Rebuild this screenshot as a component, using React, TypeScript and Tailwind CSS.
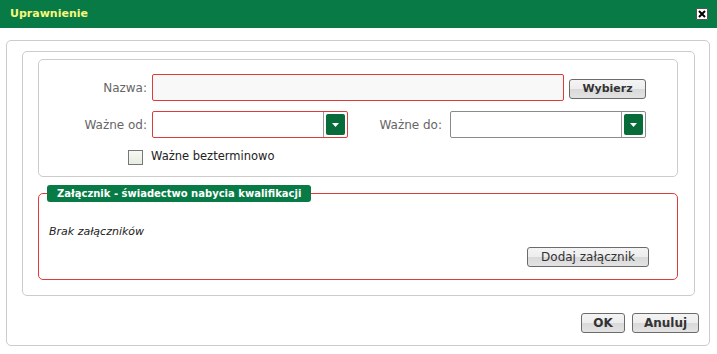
import React from "react";

const font = { fontFamily: '"DejaVu Sans", Verdana, sans-serif' };

function Btn({ children, w, bold = true, size = "text-[11px]" }: { children: React.ReactNode; w: string; bold?: boolean; size?: string }) {
  return (
    <button
      className={`${w} h-[20px] rounded-[3px] border border-[#6b6b6b] bg-[linear-gradient(#f4f4f4_0%,#ededed_50%,#d9d9d9_51%,#e3e3e3_100%)] ${size} text-[#333] leading-none flex items-center justify-center ${bold ? "font-bold" : ""}`}
    >
      {children}
    </button>
  );
}

function DateInput({ red }: { red: boolean }) {
  return (
    <div
      className={`w-[196px] h-[27px] rounded-[2px] border ${red ? "border-[#e03a3a]" : "border-[#8a8a8a]"} bg-white flex items-stretch justify-end`}
    >
      <div className="w-px bg-[#9a9a9a] mr-[2px]" />
      <div className="my-[2px] mr-[2px] w-[19px] rounded-[2px] bg-[#086b3a] flex items-center justify-center">
        <svg width="7" height="4" viewBox="0 0 7 4">
          <path d="M0 0 H7 L3.5 4 Z" fill="#fff" />
        </svg>
      </div>
    </div>
  );
}

export default function App() {
  return (
    <div className="w-[717px] h-[354px] bg-white flex flex-col" style={font}>
      <div className="h-[28px] bg-[#077a45] flex items-center justify-between pl-[10px] pr-[9px] shrink-0">
        <span className="text-[11px] font-bold text-[#f7f77c]">Uprawnienie</span>
        <div className="w-[12px] h-[12px] bg-white border border-[#555] rounded-[1px] flex items-center justify-center">
          <svg width="8" height="8" viewBox="0 0 8 8">
            <path d="M1 1 L7 7 M7 1 L1 7" stroke="#000" strokeWidth="2" />
          </svg>
        </div>
      </div>

      <div className="ml-[6px] mt-[12px] w-[704px] h-[306px] border border-[#cccccc] rounded-[5px] pl-[15px] pt-[10px] flex flex-col">
        <div className="w-[673px] h-[245px] border border-[#cccccc] rounded-[5px] pl-[15px] pt-[7px] flex flex-col">
          {/* form box */}
          <div className="w-[640px] h-[118px] border border-[#cccccc] rounded-[5px] pt-[14px] flex flex-col text-[12px] text-[#666]">
            <div className="flex items-center h-[27px]">
              <div className="w-[113px] text-right pr-[5px]">Nazwa:</div>
              <div className="w-[412px] h-[27px] rounded-[2px] border border-[#e03a3a] bg-[#f8f8f8]" />
              <div className="ml-[5px] mt-[2px]">
                <Btn w="w-[77px]">Wybierz</Btn>
              </div>
            </div>
            <div className="flex items-center h-[27px] mt-[10px]">
              <div className="w-[113px] text-right pr-[5px]">Ważne od:</div>
              <DateInput red />
              <div className="w-[102px] text-right pr-[8px]">Ważne do:</div>
              <DateInput red={false} />
            </div>
            <div className="flex items-center mt-[11px] h-[16px]">
              <div className="ml-[89px] w-[15px] h-[15px] border border-[#777] bg-[linear-gradient(#f7f9f4,#e6ede0)]" />
              <span className="ml-[8px] text-[11.5px] text-[#222]">Ważne bezterminowo</span>
            </div>
          </div>

          {/* fieldset */}
          <div className="mt-[16px] w-[640px] h-[87px] border border-[#e03a3a] rounded-[5px] flex flex-col">
            <div className="ml-[8px] -mt-[9px] self-start h-[17px] px-[10px] rounded-[3px] bg-[#077a45] text-white text-[10px] font-bold flex items-center">
              Załącznik - świadectwo nabycia kwalifikacji
            </div>
            <div className="ml-[10px] mt-[22px] text-[11px] italic text-[#222]">Brak załączników</div>
            <div className="flex justify-end pr-[28px] mt-[6px]">
              <Btn w="w-[122px]" bold={false} size="text-[12px]">Dodaj załącznik</Btn>
            </div>
          </div>
        </div>

        <div className="flex justify-end gap-[7px] mt-[17px] pr-[10px]">
          <Btn w="w-[44px]" size="text-[12px]">OK</Btn>
          <Btn w="w-[67px]" size="text-[12px]">Anuluj</Btn>
        </div>
      </div>
    </div>
  );
}
